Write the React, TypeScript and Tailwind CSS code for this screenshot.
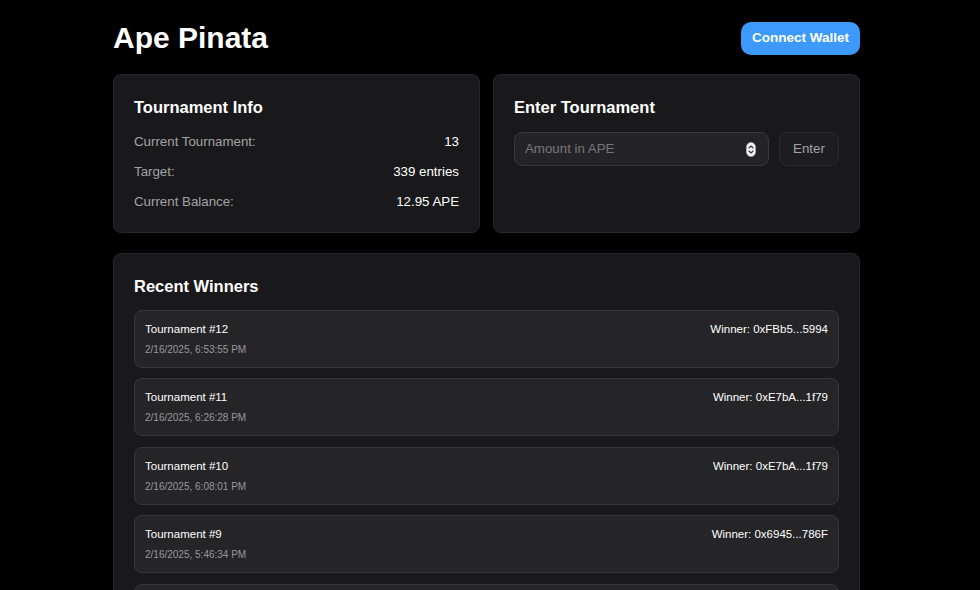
import React from "react";

const winners = [
  { n: 12, date: "2/16/2025, 6:53:55 PM", w: "0xFBb5...5994" },
  { n: 11, date: "2/16/2025, 6:26:28 PM", w: "0xE7bA...1f79" },
  { n: 10, date: "2/16/2025, 6:08:01 PM", w: "0xE7bA...1f79" },
  { n: 9, date: "2/16/2025, 5:46:34 PM", w: "0x6945...786F" },
  { n: 8, date: "2/16/2025, 5:21:10 PM", w: "0x6945...786F" },
];

function Spinner() {
  return (
    <svg width="10" height="15" viewBox="0 0 10 15" className="shrink-0">
      <rect x="0.5" y="0.5" width="9" height="14" rx="4.5" fill="#f2f2f2" stroke="#bdbdbd" strokeWidth="0.6" />
      <path d="M3 6 L5 4 L7 6" fill="none" stroke="#333" strokeWidth="1.1" strokeLinecap="round" strokeLinejoin="round" />
      <path d="M3 9 L5 11 L7 9" fill="none" stroke="#333" strokeWidth="1.1" strokeLinecap="round" strokeLinejoin="round" />
    </svg>
  );
}

export default function App() {
  return (
    <div
      className="min-h-[590px] bg-black text-white"
      style={{ fontFamily: '"Liberation Sans", Arial, sans-serif' }}
    >
      <div className="w-[973px]">
        <div className="mx-auto w-[747px]">
          <header className="flex h-[74px] items-center justify-between pt-[2px]">
            <h1 className="text-[30px] font-bold leading-none">Ape Pinata</h1>
            <button className="h-[33px] rounded-[10px] bg-[#3d9afc] px-[11px] text-[13.5px] font-bold text-white">
              Connect Wallet
            </button>
          </header>

          <div className="grid grid-cols-2 gap-[13px]">
            <section className="rounded-lg border border-[#27272a] bg-[#19191b] px-5 pt-5 pb-5">
              <h2 className="mb-[13px] text-[16.5px] font-bold leading-6">Tournament Info</h2>
              <div className="flex flex-col gap-[10px] text-[13.3px] leading-5">
                <div className="flex justify-between">
                  <span className="text-[#a3a3a6]">Current Tournament:</span>
                  <span>13</span>
                </div>
                <div className="flex justify-between">
                  <span className="text-[#a3a3a6]">Target:</span>
                  <span>339 entries</span>
                </div>
                <div className="flex justify-between">
                  <span className="text-[#a3a3a6]">Current Balance:</span>
                  <span>12.95 APE</span>
                </div>
              </div>
            </section>

            <section className="rounded-lg border border-[#27272a] bg-[#19191b] px-5 pt-5 pb-5">
              <h2 className="mb-[13px] text-[16.5px] font-bold leading-6">Enter Tournament</h2>
              <div className="flex gap-[10px]">
                <div className="flex h-[34px] flex-1 items-center justify-between rounded-lg border border-[#3a3a3d] bg-[#242427] pl-[10px] pr-[12px]">
                  <span className="text-[13.3px] text-[#77777b]">Amount in APE</span>
                  <Spinner />
                </div>
                <button className="h-[34px] w-[60px] rounded-lg border border-[#2a2a2d] bg-[#1d1d20] text-[13.3px] text-[#a3a3a6]">
                  Enter
                </button>
              </div>
            </section>
          </div>

          <section className="mt-5 rounded-lg border border-[#27272a] bg-[#19191b] px-5 pt-5 pb-5">
            <h2 className="mb-3 text-[16.5px] font-bold leading-6">Recent Winners</h2>
            <div className="flex flex-col gap-[10.4px]">
              {winners.map((w) => (
                <div
                  key={w.n}
                  className="flex justify-between rounded-lg border border-[#38383b] bg-[#252528] px-[10px] py-[10px]"
                >
                  <div className="flex flex-col gap-[6px]">
                    <span className="text-[11.5px] leading-4">Tournament #{w.n}</span>
                    <span className="text-[10px] leading-[14px] text-[#98989c]">{w.date}</span>
                  </div>
                  <span className="text-[11.5px] leading-4">Winner: {w.w}</span>
                </div>
              ))}
            </div>
          </section>
        </div>
      </div>
    </div>
  );
}
